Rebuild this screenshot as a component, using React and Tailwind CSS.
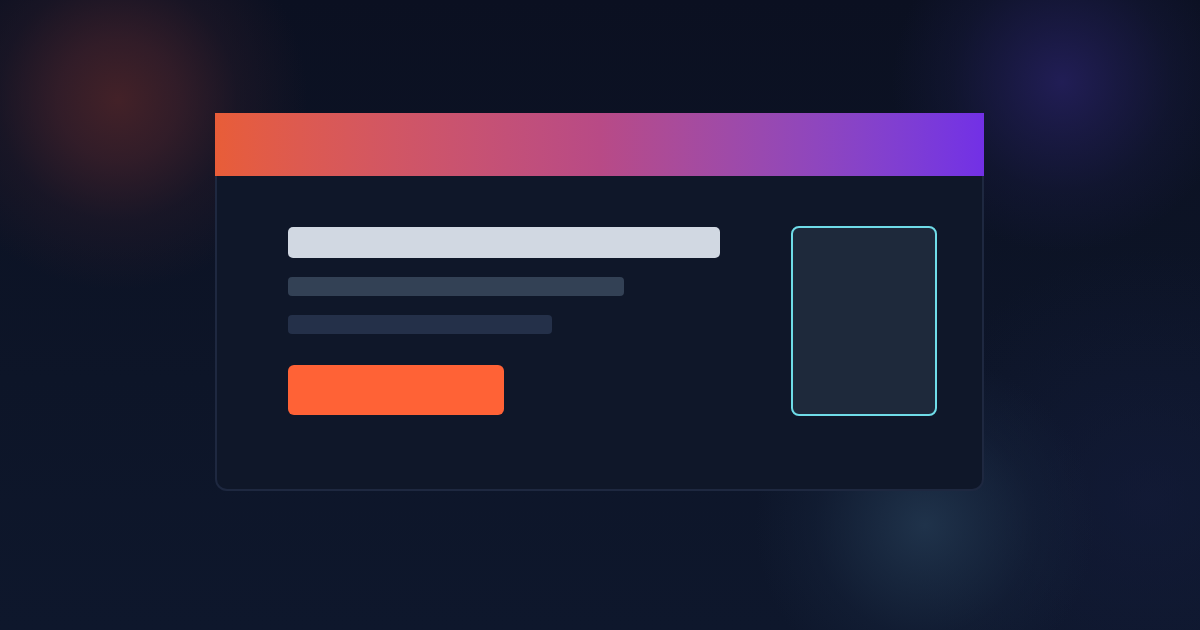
export default function App() {
  return (
    <div className="w-[1200px] h-[630px] overflow-hidden bg-[#0c1326] bg-[radial-gradient(circle_at_118px_100px,rgba(70,34,40,0.95)_0px,rgba(62,32,42,0.75)_60px,rgba(40,26,40,0.45)_120px,rgba(12,19,38,0)_190px),radial-gradient(circle_at_1062px_82px,rgba(34,30,88,0.95)_0px,rgba(30,28,78,0.7)_55px,rgba(24,26,64,0.4)_110px,rgba(12,19,38,0)_170px),radial-gradient(circle_at_925px_525px,rgba(32,52,76,0.95)_0px,rgba(28,46,70,0.7)_55px,rgba(22,36,60,0.4)_110px,rgba(12,19,38,0)_170px),radial-gradient(circle_at_1150px_500px,rgba(20,28,60,0.6)_0px,rgba(12,19,38,0)_250px),linear-gradient(180deg,#0b1021_0%,#0d1528_60%,#0e172c_100%)]">
      <div className="pt-[113px]">
        <div className="ml-[215px] w-[769px] flex flex-col">
          <div className="h-[63px] bg-gradient-to-r from-[#e85d38] via-[#b84a86] to-[#7230e6]" />
          <div className="h-[315px] bg-[#0f1729] border-x-2 border-b-2 border-[#1e2840] rounded-b-[12px] flex justify-between pl-[71px] pr-[45px] pt-[50px]">
            <div className="flex flex-col pt-[1px]">
              <div className="w-[432px] h-[31px] rounded-[5px] bg-[#d1d8e2]" />
              <div className="mt-[19px] w-[336px] h-[19px] rounded-[4px] bg-[#334155]" />
              <div className="mt-[19px] w-[264px] h-[19px] rounded-[4px] bg-[#243049]" />
              <div className="mt-[31px] w-[216px] h-[50px] rounded-[6px] bg-[#ff6236]" />
            </div>
            <div className="w-[146px] h-[190px] rounded-[8px] border-2 border-[#6fdce8] bg-[#1e293b]" />
          </div>
        </div>
      </div>
    </div>
  );
}
